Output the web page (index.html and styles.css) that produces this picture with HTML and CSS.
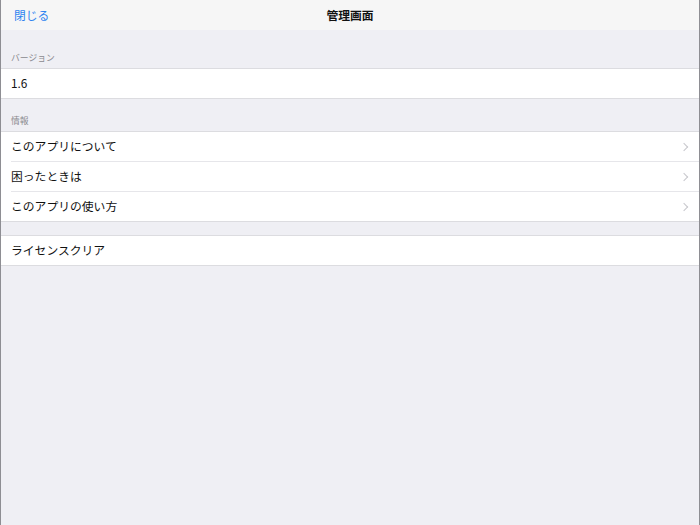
FILE: index.html
```html
<!DOCTYPE html>
<html lang="ja">
<head>
    <meta charset="UTF-8">
    <meta name="viewport" content="width=device-width, initial-scale=1.0">
    <title>管理画面</title>
    <link rel="stylesheet" href="styles.css">
</head>
<body>
    <nav class="navbar">
        <a class="nav-close" href="#">閉じる</a>
        <div class="nav-title">管理画面</div>
    </nav>

    <div class="settings">
        <div class="group-header">バージョン</div>
        <div class="group">
            <div class="cell">1.6</div>
        </div>

        <div class="group-header next">情報</div>
        <div class="group">
            <a class="cell link" href="#">このアプリについて<span class="chevron"></span></a>
            <a class="cell link" href="#">困ったときは<span class="chevron"></span></a>
            <a class="cell link" href="#">このアプリの使い方<span class="chevron"></span></a>
        </div>

        <div class="group-gap"></div>
        <div class="group">
            <a class="cell" href="#">ライセンスクリア</a>
        </div>
    </div>
</body>
</html>
```

FILE: styles.css
```css
html, body {
    height: 100%;
}
body {
    margin: 0;
    font-family: "Noto Sans CJK JP", "Noto Sans", sans-serif;
    font-size: 11.8px;
    color: #111;
    background-color: #efeff4;
    border-left: 1px solid #8e8e93;
    border-right: 1px solid #8e8e93;
    box-sizing: border-box;
}
.navbar {
    height: 30px;
    position: relative;
    display: flex;
    align-items: center;
    justify-content: center;
    background-color: #f6f6f6;
}
.nav-close {
    position: absolute;
    left: 13px;
    top: 6px;
    color: #2f84f0;
    text-decoration: none;
    font-size: 11.8px;
}
.nav-title {
    font-weight: bold;
    font-size: 11.8px;
    padding-bottom: 2px;
}
.group-header {
    padding: 20px 10px 3px;
    height: 15px;
    line-height: 15px;
    font-size: 8.8px;
    color: #8a8a8f;
}
.group-header.next {
    padding-top: 14px;
}
.group {
    background: #fff;
    border-top: 1px solid #dcdce0;
    border-bottom: 1px solid #dcdce0;
}
.cell {
    display: flex;
    align-items: center;
    justify-content: space-between;
    height: 29px;
    box-sizing: border-box;
    padding-bottom: 2px;
    margin-left: 10px;
    padding-right: 12px;
    color: #111;
    text-decoration: none;
}
.cell + .cell {
    height: 30px;
    border-top: 1px solid #e6e6ea;
}
.chevron {
    width: 5px;
    height: 5px;
    margin-top: 2px;
    border-top: 1.3px solid #c7c7cc;
    border-right: 1.3px solid #c7c7cc;
    transform: rotate(45deg);
}
.group-gap {
    height: 13px;
}
```
